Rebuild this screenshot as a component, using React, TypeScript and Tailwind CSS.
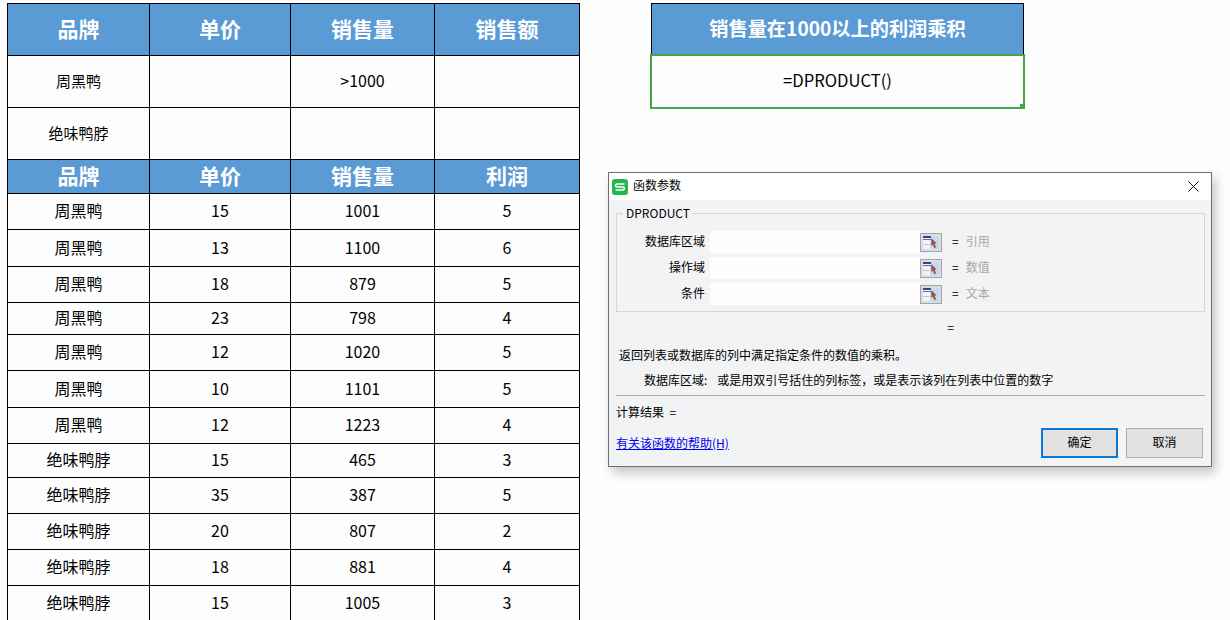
const CELL = "border border-black text-center p-0 pb-[3px]";

const TOP_ROWS = [
  { brand: "周黑鸭", qty: ">1000" },
  { brand: "绝味鸭脖", qty: "" },
];

const ROWS = [
  { brand: "周黑鸭", price: 15, qty: 1001, profit: 5, h: "h-[36px]" },
  { brand: "周黑鸭", price: 13, qty: 1100, profit: 6, h: "h-[37px]" },
  { brand: "周黑鸭", price: 18, qty: 879, profit: 5, h: "h-[36px]" },
  { brand: "周黑鸭", price: 23, qty: 798, profit: 4, h: "h-[32px]" },
  { brand: "周黑鸭", price: 12, qty: 1020, profit: 5, h: "h-[36px]" },
  { brand: "周黑鸭", price: 10, qty: 1101, profit: 5, h: "h-[37px]" },
  { brand: "周黑鸭", price: 12, qty: 1223, profit: 4, h: "h-[36px]" },
  { brand: "绝味鸭脖", price: 15, qty: 465, profit: 3, h: "h-[34px]" },
  { brand: "绝味鸭脖", price: 35, qty: 387, profit: 5, h: "h-[36px]" },
  { brand: "绝味鸭脖", price: 20, qty: 807, profit: 2, h: "h-[36px]" },
  { brand: "绝味鸭脖", price: 18, qty: 881, profit: 4, h: "h-[36px]" },
  { brand: "绝味鸭脖", price: 15, qty: 1005, profit: 3, h: "h-[36px]" },
];

const PARAMS = [
  { label: "数据库区域", hint: "引用" },
  { label: "操作域", hint: "数值" },
  { label: "条件", hint: "文本" },
];

function HeaderRow({ labels, h, size }: { labels: string[]; h: string; size: string }) {
  return (
    <tr className={`${h} bg-[#5b9bd5] text-white font-bold ${size}`}>
      {labels.map((l) => (
        <td key={l} className={CELL}>
          {l}
        </td>
      ))}
    </tr>
  );
}

function RefIcon() {
  return (
    <svg width="22" height="19" viewBox="0 0 22 19" className="shrink-0">
      <rect x="0.5" y="0.5" width="21" height="18" fill="#dcdce2" stroke="#a5a5a5" />
      <rect x="3" y="3" width="16" height="13" fill="#c3daf5" />
      <rect x="3" y="3" width="8" height="2" fill="#3b3f8f" />
      <rect x="3" y="5" width="8" height="1" fill="#f4f4f4" />
      <rect x="3" y="6" width="8" height="1" fill="#6a6a78" />
      <rect x="3" y="7" width="7" height="9" fill="#eef4fc" />
      <rect x="3" y="11" width="7" height="1" fill="#b4c8e2" />
      <path d="M11.5 5.5 L11.5 12.5 L13 11.3 L14.5 15 L15.8 14.3 L14.3 10.6 L16.2 10.2 Z" fill="#a8502f" stroke="#6a3022" strokeWidth="0.3" />
    </svg>
  );
}

function Dialog() {
  return (
    <div className="w-[604px] h-[295px] flex flex-col border border-[#6e6e6e] bg-[#f2f3f4] text-[12px] leading-none text-black shadow-[4px_6px_10px_rgba(0,0,0,0.22)]">
      <div className="h-[27px] shrink-0 bg-white flex items-center pl-[3px] pr-[12px]">
        <svg width="16" height="16" viewBox="0 0 16 16">
          <rect width="16" height="16" rx="3" fill="#22b84c" />
          <path d="M12.5 5 H5.5 Q3.6 5 3.6 6.4 Q3.6 7.9 5.5 7.9 H10.5 Q12.4 7.9 12.4 9.5 Q12.4 11 10.5 11 H3.5" fill="none" stroke="#fff" strokeWidth="1.5" />
        </svg>
        <span className="ml-[5px] pb-[3px]">函数参数</span>
        <svg width="11" height="11" viewBox="0 0 11 11" className="ml-auto">
          <path d="M0.5 0.5 L10.5 10.5 M10.5 0.5 L0.5 10.5" stroke="#111" strokeWidth="1" />
        </svg>
      </div>
      <div className="flex flex-col flex-1 pl-[7px] pr-[6px]">
        <div className="relative mt-[13px] h-[99px] border border-[#d4d6d8] pt-[17px] flex flex-col gap-[4px]">
          <span className="absolute -top-[7px] left-[6px] bg-[#f2f3f4] px-[3px]">DPRODUCT</span>
          {PARAMS.map((p) => (
            <div key={p.label} className="flex items-center h-[22px]">
              <span className="w-[88px] text-right pb-[2px]">{p.label}</span>
              <div className="ml-[5px] w-[210px] h-[22px] bg-[#fdfdfd] flex justify-end" />
              <RefIcon />
              <span className="ml-[10px] pb-[2px]">=</span>
              <span className="ml-[7px] pb-[2px] text-[#a8a8a8]">{p.hint}</span>
            </div>
          ))}
        </div>
        <div className="mt-[9px] pl-[80px] text-center">=</div>
        <div className="mt-[16px] pl-[3px]">返回列表或数据库的列中满足指定条件的数值的乘积。</div>
        <div className="mt-[13px] pl-[28px] flex">
          <span>数据库区域:</span>
          <span className="ml-[10px]">或是用双引号括住的列标签，或是表示该列在列表中位置的数字</span>
        </div>
        <div className="mt-[9px] border-t border-[#a9a9a9]" />
        <div className="mt-[10px]">计算结果&nbsp;&nbsp;=</div>
        <div className="mt-[10px] pr-[2px] flex items-center justify-between">
          <a className="text-[#0000ee] underline">有关该函数的帮助(H)</a>
          <div className="flex gap-[8px] text-[12px]">
            <button className="w-[77px] h-[30px] pb-[2px] border-2 border-[#0a78d7] bg-[#e1e1e1]">确定</button>
            <button className="w-[77px] h-[30px] pb-[2px] border border-[#adadad] bg-[#e1e1e1]">取消</button>
          </div>
        </div>
      </div>
    </div>
  );
}

export default function App() {
  return (
    <div className="w-[1230px] h-[620px] overflow-hidden bg-[#fdfdfd] flex font-['Noto_Sans_CJK_SC',sans-serif] text-black">
      <div className="ml-[7px] mt-[3px] shrink-0">
        <table className="border-collapse table-fixed w-[572px] text-[16px] leading-none">
          <colgroup>
            <col className="w-[142px]" />
            <col className="w-[141px]" />
            <col className="w-[144px]" />
            <col className="w-[145px]" />
          </colgroup>
          <tbody>
            <HeaderRow labels={["品牌", "单价", "销售量", "销售额"]} h="h-[52px]" size="text-[21px]" />
            {TOP_ROWS.map((r) => (
              <tr key={r.brand} className="h-[52px] text-[15px]">
                <td className={CELL}>{r.brand}</td>
                <td className={CELL} />
                <td className={CELL}>
                  <span className="text-[16px]">{r.qty}</span>
                </td>
                <td className={CELL} />
              </tr>
            ))}
            <HeaderRow labels={["品牌", "单价", "销售量", "利润"]} h="h-[34px]" size="text-[21px]" />
            {ROWS.map((r, i) => (
              <tr key={i} className={r.h}>
                <td className={CELL}>{r.brand}</td>
                <td className={CELL}>{r.price}</td>
                <td className={CELL}>{r.qty}</td>
                <td className={CELL}>{r.profit}</td>
              </tr>
            ))}
          </tbody>
        </table>
      </div>
      <div className="ml-[28px] flex flex-col">
        <div className="ml-[43px] mt-[3px] w-[373px] leading-none">
          <div className="h-[52px] pb-[2px] bg-[#5b9bd5] border border-black border-b-0 flex items-center justify-center text-white font-bold text-[19.2px]">
            销售量在1000以上的利润乘积
          </div>
          <div className="relative -ml-px -mt-px w-[375px] h-[55px] pb-[3px] border-2 border-[#4aa54a] flex items-center justify-center text-[16.6px]">
            =DPRODUCT()
            <span className="absolute -right-[2px] -bottom-[2px] w-[5px] h-[5px] bg-[#4aa54a]" />
          </div>
        </div>
        <div className="mt-[63px]">
          <Dialog />
        </div>
      </div>
    </div>
  );
}
